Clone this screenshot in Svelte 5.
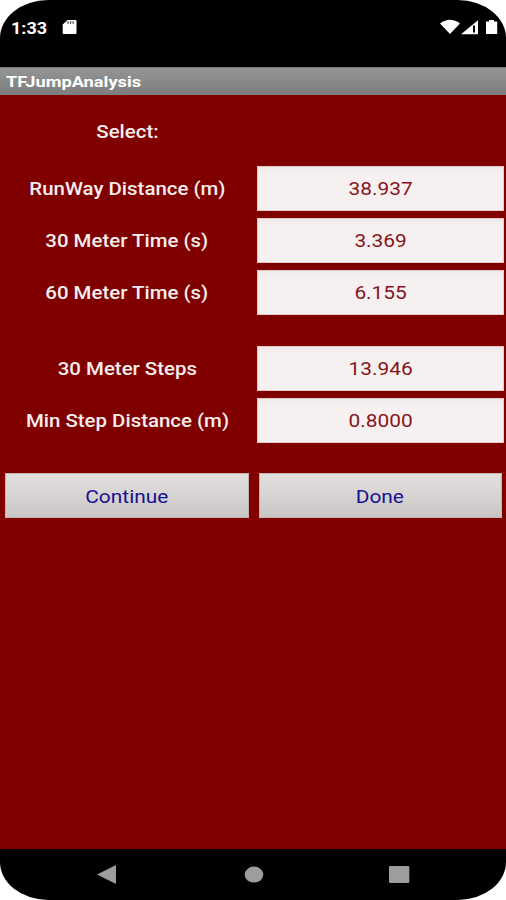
<script>
  const groups = [
    [
      { label: 'RunWay Distance (m)', value: '38.937' },
      { label: '30 Meter Time (s)', value: '3.369' },
      { label: '60 Meter Time (s)', value: '6.155' }
    ],
    [
      { label: '30 Meter Steps', value: '13.946' },
      { label: 'Min Step Distance (m)', value: '0.8000' }
    ]
  ];
</script>

<div class="phone">
  <div class="status">
    <span class="clock"><span class="wide">1:33</span></span>
    <svg class="card" width="15" height="16" viewBox="0 0 15 16">
      <path d="M5.5 1h8a1 1 0 0 1 1 1v12a1 1 0 0 1-1 1H1.7a1 1 0 0 1-1-1V5.5z" fill="#fff" />
      <path d="M6 2.2v2.6M8.6 2.2v2.6M11.2 2.2v2.6" stroke="#555" stroke-width="1.4" />
    </svg>
    <svg class="signals" width="60" height="16" viewBox="0 0 60 16">
      <path d="M0 4.5Q10 -3 20 4.5L10 15z" fill="#fff" />
      <path d="M21 15.3L38 1.2V15.3z" fill="#fff" />
      <path d="M34 6.5v7" stroke="#000" stroke-width="2" />
      <path d="M46 2.5h3V1h5v1.5h3.2V15H46z" fill="#fff" />
    </svg>
  </div>
  <header><span class="wide">TFJumpAnalysis</span></header>
  <main>
    <div class="select"><span class="wide">Select:</span></div>
    {#each groups as rows}
      <section>
        {#each rows as row}
          <div class="row">
            <div class="label"><span class="wide">{row.label}</span></div>
            <div class="field"><span class="wide">{row.value}</span></div>
          </div>
        {/each}
      </section>
    {/each}
    <div class="actions">
      <button><span class="wide">Continue</span></button>
      <button><span class="wide">Done</span></button>
    </div>
  </main>
  <nav>
    <svg width="506" height="51" viewBox="0 0 506 51" fill="#9d9d9d">
      <path d="M97 25.5L115 16.5Q116 16 116 17V34Q116 35 115 34.5z" />
      <ellipse cx="254" cy="25.6" rx="9.3" ry="8" />
      <rect x="389" y="17" width="20.3" height="17" rx="1.3" />
    </svg>
  </nav>
</div>

<style>
  :global(body) {
    background: #fff;
  }
  .phone {
    width: 506px;
    height: 900px;
    box-sizing: border-box;
    display: flex;
    flex-direction: column;
    overflow: hidden;
    border-radius: 48px / 38px;
    background: #000;
    font-family: Roboto, 'Liberation Sans', sans-serif;
    font-size: 18px;
  }
  .wide {
    display: inline-block;
    white-space: nowrap;
    transform: scaleX(1.16);
  }
  .status {
    height: 67px;
    box-sizing: border-box;
    padding: 19px 6px 0 11px;
    display: flex;
    align-items: flex-start;
    color: #fff;
  }
  .clock {
    width: 51px;
    font-size: 17px;
    font-weight: 700;
    line-height: 18px;
  }
  .clock .wide {
    transform: scaleX(1.06);
    transform-origin: left;
  }
  header .wide {
    transform: scaleX(1.175);
    transform-origin: left;
  }
  .signals {
    margin-left: auto;
  }
  header {
    height: 28px;
    box-sizing: border-box;
    padding-left: 6px;
    border-top: 1px solid #777;
    background: linear-gradient(#959595, #7d7d7d);
    color: #fff;
    font-size: 15.5px;
    font-weight: 700;
    line-height: 28px;
  }
  main {
    height: 754px;
    background: #800000;
  }
  .select {
    width: 254px;
    height: 71px;
    line-height: 73px;
    text-align: center;
    color: #f5eeee;
    font-weight: 500;
  }
  .select .wide,
  .label .wide {
    transform: scaleX(1.135);
  }
  section {
    display: flex;
    flex-direction: column;
    gap: 7px;
    margin-bottom: 31px;
  }
  section + section {
    margin-bottom: 30px;
  }
  .row {
    display: flex;
    height: 45px;
    line-height: 46px;
    text-align: center;
  }
  .label {
    width: 254px;
    margin-right: 3px;
    color: #f5eeee;
    font-weight: 500;
  }
  .field {
    width: 246.5px;
    box-sizing: border-box;
    background: linear-gradient(#eee9e8, #f6f1f0 8px);
    box-shadow: inset 0 0 0 1px #e0caca;
    color: #86141c;
  }
  .actions {
    display: flex;
    gap: 10px;
    padding-left: 5px;
  }
  button {
    width: 243.5px;
    height: 45px;
    padding: 1px 0 0;
    border: 1px solid #c5b3b3;
    border-radius: 0;
    background: linear-gradient(#e2dedd, #d9d5d5 45%, #cac5c5);
    color: #1a1191;
    font: inherit;
  }
  nav {
    height: 51px;
  }
</style>
